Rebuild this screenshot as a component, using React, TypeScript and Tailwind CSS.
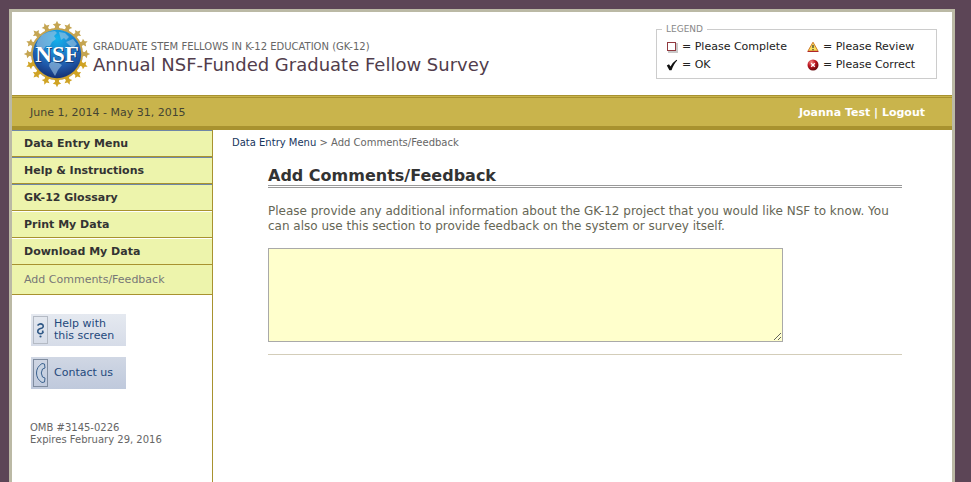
import React from "react";

const menuItems = [
    { label: "Data Entry Menu", line: "border-t-[#6f87a8]" },
    { label: "Help & Instructions", line: "border-t-[#6f87a8]" },
    { label: "GK-12 Glossary", line: "border-t-[#6f87a8]" },
    { label: "Print My Data", line: "border-t-white" },
    { label: "Download My Data", line: "border-t-white" },
];

const ringAngles = Array.from({ length: 16 }, (_, i) => i * 22.5);

const NsfLogo: React.FC = () => (
    <svg viewBox="0 0 68 68" className="w-[68px] h-[68px] shrink-0" role="img" aria-label="NSF">
        <defs>
            <radialGradient id="globe" cx="0.5" cy="0.18" r="0.85">
                <stop offset="0" stopColor="#12b4ee" />
                <stop offset="0.35" stopColor="#1b86cf" />
                <stop offset="0.7" stopColor="#1f57a8" />
                <stop offset="1" stopColor="#142c6c" />
            </radialGradient>
            <linearGradient id="gold" x1="0" y1="0" x2="0" y2="68" gradientUnits="userSpaceOnUse">
                <stop offset="0" stopColor="#cfb468" />
                <stop offset="0.5" stopColor="#b8922e" />
                <stop offset="1" stopColor="#d3a51c" />
            </linearGradient>
        </defs>
        <circle cx="34" cy="34" r="25" fill="none" stroke="#c5a24a" strokeWidth="2" />
        {ringAngles.map((angle) => (
            <g key={angle} transform={`rotate(${angle} 34 34)`}>
                <path
                    d="M34 .8 L35.3 3.6 L38.2 4.2 L35.9 6.2 L36.2 8 L38.4 10.4 H29.6 L31.8 8 L32.1 6.2 L29.8 4.2 L32.7 3.6 Z"
                    fill={angle > 90 && angle < 270 ? "#d0a324" : "#c5a552"}
                />
            </g>
        ))}
        <circle cx="34" cy="34" r="24.2" fill="url(#globe)" />
        <path
            d="M15 20 L19 15 L25 12 L32 11 L34 13 L31 16 L33 19 L29 22 L27 26 L23 26 L20 30 L16 29 L13 25 Z M36 12 L42 13 L46 17 L43 20 L41 18 L38 20 Z M43 22 L50 19 L54 24 L50 28 L46 25 Z M27 42 L34 42 L39 45 L35 50 L32 56 L29 51 L26 46 Z"
            fill="#a0c6e2"
            opacity="0.6"
        />
        <g fontFamily="Liberation Serif, serif" fontWeight="bold" fontSize="23" textAnchor="middle">
            <text x="35" y="43" fill="#15396f">NSF</text>
            <text x="34" y="42" fill="#ffffff">NSF</text>
        </g>
    </svg>
);

const BoxIcon: React.FC = () => (
    <svg viewBox="0 0 12 12" className="w-3 h-3 shrink-0" aria-hidden="true">
        <path d="M2 11 H11 V2" fill="none" stroke="#c9c9c9" strokeWidth="2" />
        <rect x="1.5" y="1.5" width="8" height="8" fill="#ffffff" stroke="#923a40" />
    </svg>
);

const CheckIcon: React.FC = () => (
    <svg viewBox="0 0 12 12" className="w-3 h-3 shrink-0" aria-hidden="true">
        <path d="M.8 6.5 L3 5.2 L4.5 7.6 Q7 3 10.5 .8 L11.2 1.5 Q8 4.5 5.5 11.2 L3.4 11.2 Z" fill="#111111" />
    </svg>
);

const WarningIcon: React.FC = () => (
    <svg viewBox="0 0 12 12" className="w-3 h-3 shrink-0" aria-hidden="true">
        <path d="M6 1.2 L11 10 H1 Z" fill="#f8df5c" stroke="#d07a28" strokeLinejoin="round" />
        <path d="M.5 10.5 H11.5" stroke="#b0252a" />
        <path d="M6 4 V7 M6 8 V9.2" stroke="#333333" strokeWidth="1.2" />
    </svg>
);

const ErrorIcon: React.FC = () => (
    <svg viewBox="0 0 12 12" className="w-3 h-3 shrink-0" aria-hidden="true">
        <defs>
            <radialGradient id="ball" cx="0.35" cy="0.25" r="0.8">
                <stop offset="0" stopColor="#f08a86" />
                <stop offset="0.45" stopColor="#c21722" />
                <stop offset="1" stopColor="#5c0509" />
            </radialGradient>
        </defs>
        <circle cx="6" cy="6" r="5.5" fill="url(#ball)" />
        <path d="M4.2 4.2 L7.8 7.8 M7.8 4.2 L4.2 7.8" stroke="#ffffff" strokeWidth="1.4" />
    </svg>
);

const Legend: React.FC = () => (
    <fieldset className="w-[281px] border border-[#cccccc] pb-1 pl-[9px] text-[11px] leading-[18px] text-[#222222]">
        <legend className="-ml-1 px-1 text-[9px] leading-[10px] text-[#888888]">LEGEND</legend>
        <div className="grid grid-cols-[141px_1fr] pt-1 whitespace-nowrap">
            <div className="flex items-center gap-1"><BoxIcon />= Please Complete</div>
            <div className="flex items-center gap-1"><WarningIcon />= Please Review</div>
            <div className="flex items-center gap-1"><CheckIcon />= OK</div>
            <div className="flex items-center gap-1"><ErrorIcon />= Please Correct</div>
        </div>
    </fieldset>
);

const Sidebar: React.FC = () => (
    <aside className="w-[201px] shrink-0 border-r border-[#a8922f]">
        <nav className="bg-[#edf4ac] text-[11px] text-[#333333]">
            {menuItems.map((item) => (
                <a
                    key={item.label}
                    href="#"
                    className={`block border-t border-b border-b-[#a8922f] pl-3 pt-px font-bold leading-[24px] ${item.line}`}
                >
                    {item.label}
                </a>
            ))}
            <a href="#" className="block border-b border-[#a8922f] pl-3 pt-px leading-[28px] text-[#777777]">
                Add Comments/Feedback
            </a>
        </nav>
        <div className="flex flex-col items-start gap-[11px] pl-[19px] pt-[19px] text-[11px] leading-[12px] text-[#24497c]">
            <button className="flex h-8 w-[95px] items-center gap-1.5 whitespace-nowrap bg-linear-to-b from-[#e5e9f0] to-[#d6dce8] pl-0.5 text-left">
                <svg viewBox="0 0 15 28" className="w-[15px] h-7 shrink-0" aria-hidden="true">
                    <rect x=".5" y=".5" width="14" height="27" fill="none" stroke="#b4bac4" />
                    <path d="M4.5 9.5 Q7.5 6.5 10 9 Q11 12 7.5 12.5 Q4 13.5 5 16.5 Q7.5 19 10 16.5 L9.5 14.5" fill="none" stroke="#2d5684" strokeWidth="1.6" />
                    <circle cx="7.5" cy="20.5" r="1.1" fill="#2d5684" />
                </svg>
                <span>Help with<br />this screen</span>
            </button>
            <button className="flex h-8 w-[95px] items-center gap-1.5 whitespace-nowrap bg-linear-to-b from-[#d0d7e4] to-[#bfc9dc] pl-0.5 text-left">
                <svg viewBox="0 0 15 28" className="w-[15px] h-7 shrink-0" aria-hidden="true">
                    <rect x=".5" y=".5" width="14" height="27" fill="none" stroke="#7f8c9f" />
                    <path d="M9 4.5 L11.5 5 L12 9 L9.5 10 Q7 14 9.5 18 L12 19 L11.5 23 L9 23.5 Q3.5 20 3.5 14 Q3.5 8 9 4.5 Z" fill="#c8d3e2" stroke="#3b628f" />
                </svg>
                <span>Contact us</span>
            </button>
        </div>
        <p className="pl-[18px] pt-[33px] text-[10px] leading-[12px] text-[#666666]">
            OMB #3145-0226<br />Expires February 29, 2016
        </p>
    </aside>
);

const App: React.FC = () => {
    return (
        <div
            className="flex min-h-screen flex-col bg-[#5c4556] pl-[9px] pr-4 pt-[9px]"
            style={{ fontFamily: 'Verdana, "DejaVu Sans", sans-serif' }}
        >
            <div className="flex flex-1 flex-col border-[3px] border-b-0 border-[#bbb9a5] bg-white">
                <header className="flex items-start justify-between pb-[7px] pl-[11px] pr-[15px]">
                    <div className="flex items-center pt-2">
                        <NsfLogo />
                        <div className="pl-0.5 pt-2 text-[#666666]">
                            <div className="text-[10px] leading-[14px]">GRADUATE STEM FELLOWS IN K-12 EDUCATION (GK-12)</div>
                            <div className="text-[18px] leading-[22px] text-[#513d4c]">Annual NSF-Funded Graduate Fellow Survey</div>
                        </div>
                    </div>
                    <div className="pt-3">
                        <Legend />
                    </div>
                </header>
                <div className="h-[3px] border-y border-[#a8922f] bg-[#c9b44c]" />
                <div className="flex items-center justify-between border-b-4 border-[#a8922f] bg-[#c9b44c] pl-[18px] pr-[27px] pt-0.5 text-[11px] leading-[26px] text-[#444433]">
                    <span>June 1, 2014 - May 31, 2015</span>
                    <span className="font-bold text-white">
                        <a href="#">Joanna Test</a> | <a href="#">Logout</a>
                    </span>
                </div>
                <div className="flex flex-1">
                    <Sidebar />
                    <main className="min-w-0 flex-1 pl-[19px] pr-[50px] pt-[5px]">
                        <div className="text-[10px] leading-[16px] text-[#666666]">
                            <a href="#" className="text-[#17365d]">Data Entry Menu</a> &gt; Add Comments/Feedback
                        </div>
                        <div className="pl-9 pt-4">
                            <h1 className="border-b-[3px] border-double border-[#999999] text-[16px] font-bold leading-[18px] text-[#333333]">
                                Add Comments/Feedback
                            </h1>
                            <label htmlFor="comments" className="block pt-4 text-[12px] leading-[15px] text-[#666655]">
                                Please provide any additional information about the GK-12 project that you would like NSF to know. You
                                can also use this section to provide feedback on the system or survey itself.
                            </label>
                            <textarea
                                id="comments"
                                className="mt-[14px] block h-[94px] w-[515px] max-w-full border border-[#a9a9a9] bg-[#ffffcc] p-1 text-[12px] outline-none"
                            />
                            <hr className="mt-3 border-[#d3cdb9]" />
                        </div>
                    </main>
                </div>
            </div>
        </div>
    );
};

export default App;
